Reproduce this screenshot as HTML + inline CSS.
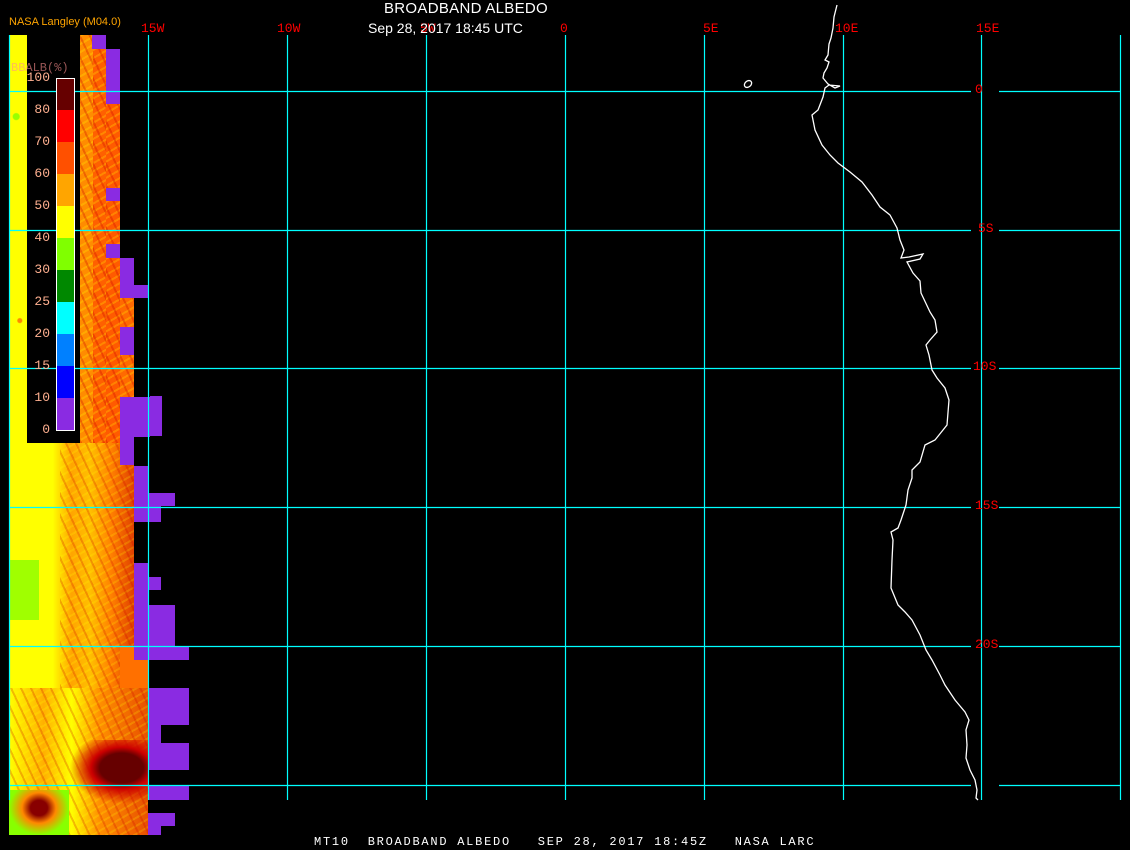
<!DOCTYPE html>
<html><head><meta charset="utf-8"><style>
html,body{margin:0;padding:0;background:#000;width:1130px;height:850px;overflow:hidden;position:relative;font-family:"Liberation Sans",sans-serif}
.b{position:absolute}
.p{position:absolute;background:#8a2be2}
.t{position:absolute;color:#fff;white-space:nowrap}
.r{position:absolute;color:#f00;font-family:"Liberation Mono",monospace;font-size:13px;white-space:nowrap;letter-spacing:0px}
.l{position:absolute;color:#ffb090;font-family:"Liberation Mono",monospace;font-size:13px;right:1080px;white-space:nowrap}
.tx{background-image:repeating-linear-gradient(65deg,rgba(200,0,0,.3) 0 2px,transparent 2px 9px),repeating-linear-gradient(150deg,rgba(255,255,0,.25) 0 2px,transparent 2px 7px)}
</style></head><body>
<div class="b" style="left:9px;top:35px;width:18px;height:408px;background:#ff0;background-image:radial-gradient(circle at 40% 20%,#9f0 0 3px,transparent 4px),radial-gradient(circle at 60% 70%,#f80 0 2px,transparent 3px)"></div>
<div class="b tx" style="left:80px;top:35px;width:13px;height:408px;background-color:#ff8c00"></div>
<div class="b tx" style="left:93px;top:49px;width:13px;height:394px;background-color:#ff6000"></div>
<div class="b tx" style="left:106px;top:104px;width:14px;height:339px;background-color:#ff5a00"></div>
<div class="b tx" style="left:120px;top:298px;width:14px;height:145px;background-color:#ff6a00"></div>
<div class="b" style="left:9px;top:443px;width:125px;height:245px;background:linear-gradient(90deg,#ff0 0,#ff0 35%,#ffa500 50%,#ffc000 65%,#ff8000 82%,#e04000 100%)"></div>
<div class="b tx" style="left:60px;top:443px;width:74px;height:245px;opacity:.8"></div>
<div class="b" style="left:9px;top:560px;width:30px;height:60px;background:#8f0;opacity:.8"></div>
<div class="b" style="left:9px;top:688px;width:139px;height:147px;background:linear-gradient(90deg,#ff0 0,#ffb000 25%,#ff0 45%,#ff9000 65%,#e85000 100%)"></div>
<div class="b tx" style="left:9px;top:688px;width:139px;height:147px;opacity:.8"></div>
<div class="b" style="left:60px;top:740px;width:88px;height:70px;background:radial-gradient(ellipse at 70% 40%,#600 0 25%,#c00 35%,transparent 60%)"></div>
<div class="b" style="left:9px;top:790px;width:60px;height:45px;background:radial-gradient(ellipse at 50% 40%,#800 0 20%,#f80 40%,#8f0 70%)"></div>
<div class="b" style="left:120px;top:646px;width:28px;height:42px;background:#ff7000"></div>
<div class="p" style="left:92px;top:35px;width:14px;height:14px"></div>
<div class="p" style="left:106px;top:49px;width:14px;height:55px"></div>
<div class="p" style="left:106px;top:188px;width:14px;height:13px"></div>
<div class="p" style="left:106px;top:244px;width:14px;height:14px"></div>
<div class="p" style="left:120px;top:258px;width:14px;height:40px"></div>
<div class="p" style="left:134px;top:285px;width:14px;height:13px"></div>
<div class="p" style="left:120px;top:327px;width:14px;height:28px"></div>
<div class="p" style="left:120px;top:397px;width:30px;height:40px"></div>
<div class="p" style="left:150px;top:396px;width:12px;height:40px"></div>
<div class="p" style="left:120px;top:437px;width:14px;height:28px"></div>
<div class="p" style="left:134px;top:466px;width:14px;height:56px"></div>
<div class="p" style="left:148px;top:493px;width:27px;height:13px"></div>
<div class="p" style="left:148px;top:506px;width:13px;height:16px"></div>
<div class="p" style="left:134px;top:563px;width:14px;height:83px"></div>
<div class="p" style="left:148px;top:577px;width:13px;height:13px"></div>
<div class="p" style="left:148px;top:605px;width:27px;height:41px"></div>
<div class="p" style="left:134px;top:646px;width:55px;height:14px"></div>
<div class="p" style="left:148px;top:688px;width:41px;height:37px"></div>
<div class="p" style="left:148px;top:725px;width:13px;height:45px"></div>
<div class="p" style="left:161px;top:743px;width:28px;height:27px"></div>
<div class="p" style="left:148px;top:785px;width:41px;height:15px"></div>
<div class="p" style="left:148px;top:813px;width:27px;height:13px"></div>
<div class="p" style="left:148px;top:826px;width:13px;height:9px"></div>
<div class="b" style="left:27px;top:35px;width:53px;height:408px;background:#000"></div>
<svg class="b" style="left:0;top:0" width="1130" height="850">
<g stroke="#0ff" stroke-width="1.2" fill="none">
<path d="M9.5 35V800M148.5 35V800M287.5 35V800M426.5 35V800M565.5 35V800M704.5 35V800M843.5 35V800M981.5 35V800M1120.5 35V800"/>
<path d="M9 91.5H971M999 91.5H1120M9 230.5H971M999 230.5H1120M9 368.5H971M999 368.5H1120M9 507.5H971M999 507.5H1120M9 646.5H971M999 646.5H1120M9 785.5H971M999 785.5H1120"/>
</g>
<g stroke="#fff" stroke-width="1.3" fill="none">
<polyline points="837,5 834,17 833,28 831,38 829,44 828,55 825,60 829,62 827,68 824,73 823,78 828,84 835,88 840,86 829,85 825,88 823,97 818,110 812,115 815,130 822,145 830,155 838,163 850,172 862,182 872,195 880,207 890,215 897,228 900,240 904,250 901,258 909,257 923,254 920,259 907,262 913,273 920,281 921,293 930,312 935,320 937,332 930,340 926,345 929,355 932,370 937,378 945,388 949,400 947,425 935,440 925,445 920,462 912,470 912,478 908,490 906,505 901,520 898,528 891,532 893,540 892,560 891,588 898,605 905,612 912,620 920,635 926,650 932,660 940,675 945,685 955,700 965,712 969,720 966,730 967,745 966,758 970,770 975,780 977,790 976,798 978,800"/>
<ellipse cx="748" cy="84" rx="4" ry="3" transform="rotate(-40 748 84)"/>
</g>
<rect x="56.5" y="78.5" width="18" height="352" fill="none" stroke="#fff"/>
<rect x="57" y="79" width="17" height="31" fill="#600"/>
<rect x="57" y="110" width="17" height="32" fill="#f00"/>
<rect x="57" y="142" width="17" height="32" fill="#ff5000"/>
<rect x="57" y="174" width="17" height="32" fill="#ffa500"/>
<rect x="57" y="206" width="17" height="32" fill="#ff0"/>
<rect x="57" y="238" width="17" height="32" fill="#80ff00"/>
<rect x="57" y="270" width="17" height="32" fill="#008800"/>
<rect x="57" y="302" width="17" height="32" fill="#0ff"/>
<rect x="57" y="334" width="17" height="32" fill="#0080ff"/>
<rect x="57" y="366" width="17" height="32" fill="#0000ff"/>
<rect x="57" y="398" width="17" height="32" fill="#8a2be2"/>
</svg>
<div class="t" style="left:9px;top:16px;font-size:11px;color:#ffa500">NASA Langley (M04.0)</div>
<div class="t" style="left:11px;top:61px;font-size:12px;color:#ff9090;opacity:.6;font-family:'Liberation Mono',monospace">BBALB(%)</div>
<div class="l" style="top:70px">100</div>
<div class="l" style="top:102px">80</div>
<div class="l" style="top:134px">70</div>
<div class="l" style="top:166px">60</div>
<div class="l" style="top:198px">50</div>
<div class="l" style="top:230px">40</div>
<div class="l" style="top:262px">30</div>
<div class="l" style="top:294px">25</div>
<div class="l" style="top:326px">20</div>
<div class="l" style="top:358px">15</div>
<div class="l" style="top:390px">10</div>
<div class="l" style="top:422px">0</div>
<div class="t" style="left:384px;top:0px;font-size:15px;letter-spacing:.3px">BROADBAND ALBEDO</div>
<div class="r" style="left:141px;top:21px">15W</div>
<div class="r" style="left:277px;top:21px">10W</div>
<div class="r" style="left:420px;top:21px">5W</div>
<div class="r" style="left:560px;top:21px">0</div>
<div class="r" style="left:703px;top:21px">5E</div>
<div class="r" style="left:835px;top:21px">10E</div>
<div class="r" style="left:976px;top:21px">15E</div>
<div class="t" style="left:368px;top:20px;font-size:14px">Sep 28, 2017 18:45 UTC</div>
<div class="r" style="left:975px;top:82px">0</div>
<div class="r" style="left:978px;top:221px">5S</div>
<div class="r" style="left:973px;top:359px">10S</div>
<div class="r" style="left:975px;top:498px">15S</div>
<div class="r" style="left:975px;top:637px">20S</div>
<div class="t" style="left:314px;top:835px;font-size:12px;font-family:'Liberation Mono',monospace;letter-spacing:1.75px;white-space:pre">MT10  BROADBAND ALBEDO   SEP 28, 2017 18:45Z   NASA LARC</div>
</body></html>
